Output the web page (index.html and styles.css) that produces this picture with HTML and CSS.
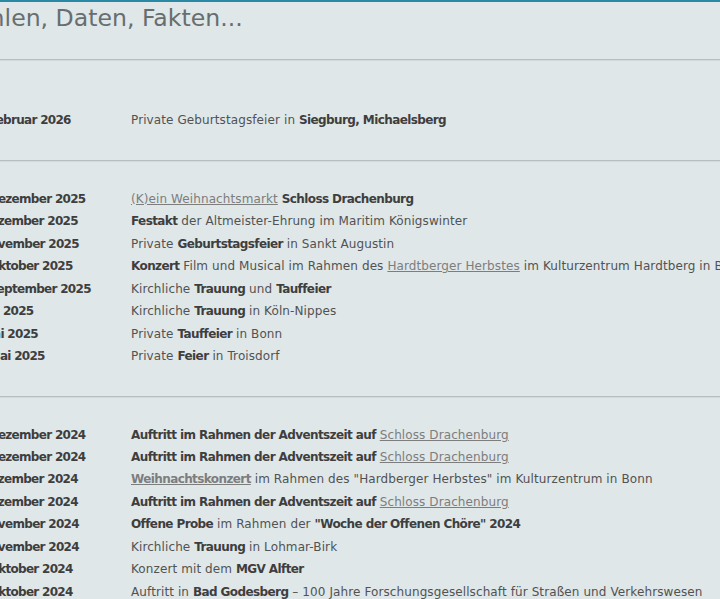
FILE: index.html
```html
<!DOCTYPE html>
<html lang="de">
<head>
    <meta charset="UTF-8">
    <meta name="viewport" content="width=device-width, initial-scale=1.0">
    <title>Zahlen, Daten, Fakten...</title>
    <link rel="stylesheet" href="styles.css">
</head>
<body>
    <div class="page">
        <div class="content">
            <h1 class="page-title">Zahlen, Daten, Fakten...</h1>

            <hr class="divider">

            <!-- 2026 -->
            <section class="year">
                <table class="dates">
                    <tr class="spacer"><td class="date"></td><td></td></tr>
                    <tr>
                        <td class="date">14. Februar 2026</td>
                        <td>Private Geburtstagsfeier in <b>Siegburg, Michaelsberg</b></td>
                    </tr>
                </table>
            </section>

            <hr class="divider">

            <!-- 2025 -->
            <section class="year">
                <table class="dates">
                    <tr>
                        <td class="date">13. Dezember 2025</td>
                        <td><a href="#">(K)ein Weihnachtsmarkt</a> <b>Schloss Drachenburg</b></td>
                    </tr>
                    <tr>
                        <td class="date">6. Dezember 2025</td>
                        <td><b>Festakt</b> der Altmeister-Ehrung im Maritim Königswinter</td>
                    </tr>
                    <tr>
                        <td class="date">8. November 2025</td>
                        <td>Private <b>Geburtstagsfeier</b> in Sankt Augustin</td>
                    </tr>
                    <tr>
                        <td class="date">26. Oktober 2025</td>
                        <td><b>Konzert</b> Film und Musical im Rahmen des <a href="#">Hardtberger Herbstes</a> im Kulturzentrum Hardtberg in Bonn</td>
                    </tr>
                    <tr>
                        <td class="date">13. September 2025</td>
                        <td>Kirchliche <b>Trauung</b> und <b>Tauffeier</b></td>
                    </tr>
                    <tr>
                        <td class="date">5. Juli 2025</td>
                        <td>Kirchliche <b>Trauung</b> in Köln-Nippes</td>
                    </tr>
                    <tr>
                        <td class="date">1. Juni 2025</td>
                        <td>Private <b>Tauffeier</b> in Bonn</td>
                    </tr>
                    <tr>
                        <td class="date">17. Mai 2025</td>
                        <td>Private <b>Feier</b> in Troisdorf</td>
                    </tr>
                </table>
            </section>

            <hr class="divider">

            <!-- 2024 -->
            <section class="year">
                <table class="dates">
                    <tr>
                        <td class="date">22. Dezember 2024</td>
                        <td><b>Auftritt im Rahmen der Adventszeit auf</b> <a href="#">Schloss Drachenburg</a></td>
                    </tr>
                    <tr>
                        <td class="date">15. Dezember 2024</td>
                        <td><b>Auftritt im Rahmen der Adventszeit auf</b> <a href="#">Schloss Drachenburg</a></td>
                    </tr>
                    <tr>
                        <td class="date">8. Dezember 2024</td>
                        <td><a href="#"><b>Weihnachtskonzert</b></a> im Rahmen des "Hardberger Herbstes" im Kulturzentrum in Bonn</td>
                    </tr>
                    <tr>
                        <td class="date">1. Dezember 2024</td>
                        <td><b>Auftritt im Rahmen der Adventszeit auf</b> <a href="#">Schloss Drachenburg</a></td>
                    </tr>
                    <tr>
                        <td class="date">8. November 2024</td>
                        <td><b>Offene Probe</b> im Rahmen der <b>"Woche der Offenen Chöre" 2024</b></td>
                    </tr>
                    <tr>
                        <td class="date">2. November 2024</td>
                        <td>Kirchliche <b>Trauung</b> in Lohmar-Birk</td>
                    </tr>
                    <tr>
                        <td class="date">27. Oktober 2024</td>
                        <td>Konzert mit dem <b>MGV Alfter</b></td>
                    </tr>
                    <tr>
                        <td class="date">10. Oktober 2024</td>
                        <td>Auftritt in <b>Bad Godesberg</b> – 100 Jahre Forschungsgesellschaft für Straßen und Verkehrswesen</td>
                    </tr>
                </table>
            </section>
        </div>
    </div>
</body>
</html>
```

FILE: styles.css
```css
* {
    margin: 0;
    padding: 0;
    box-sizing: border-box;
}

html, body {
    overflow: hidden;
}

body {
    font-family: "DejaVu Sans", Verdana, sans-serif;
    font-size: 12px;
    color: #525252;
    background-color: #dfe7e9;
    border-top: 2px solid #2a8aa6;
}

.page {
    width: 100%;
    overflow: hidden;
}

.content {
    width: 1000px;
    margin-left: -34px;
}

.page-title {
    font-size: 23.6px;
    font-weight: normal;
    line-height: 28px;
    color: #676e70;
    margin: 2px 0 27px -7px;
}

.divider {
    border: 0;
    border-top: 1px solid #b7bec0;
    border-bottom: 1px solid #d2dadc;
    height: 0;
}

.year {
    padding: 26px 0 28px;
}

.dates {
    border-collapse: collapse;
    letter-spacing: 0.1px;
}

.dates td {
    padding: 0;
    line-height: 22.45px;
    white-space: nowrap;
    vertical-align: top;
}

.spacer td {
    height: 22.45px;
}

.dates .date {
    width: 165px;
    font-weight: bold;
    color: #3e3e3e;
    letter-spacing: -0.7px;
}

b {
    color: #3e3e3e;
    letter-spacing: -0.6px;
}

a {
    color: #7d7d7d;
}

a b {
    color: #7d7d7d;
}
```
